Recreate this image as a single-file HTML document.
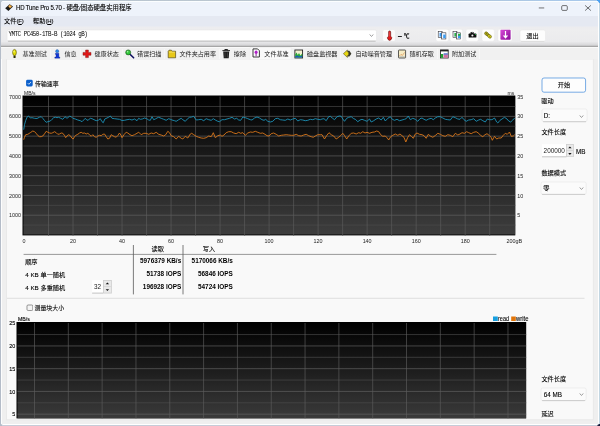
<!DOCTYPE html>
<html lang="zh-CN"><head><meta charset="utf-8"><title>HD Tune Pro 5.70</title>
<style>
html,body{margin:0;padding:0;}
body{width:600px;height:426px;overflow:hidden;position:relative;font-family:"Liberation Sans","Noto Sans CJK SC",sans-serif;background:#c6ccd8;-webkit-text-stroke:0.1px currentColor;}
#bl{position:absolute;left:0;top:0;width:2px;height:426px;background:#b4bcc8;}#br{position:absolute;right:0;top:0;width:2px;height:426px;background:#c2d6e2;}#bt{position:absolute;left:0;top:0;width:600px;height:2px;background:linear-gradient(90deg,#b8c4d0,#bcc8d0 60%,#a8c8ea 95%);}
#corner{position:absolute;right:0;bottom:0;width:3px;height:2.2px;background:radial-gradient(circle at 100% 100%,#0a0a2a 0,#1a2040 50%,rgba(160,170,200,0) 100%);}
#corner2{position:absolute;right:0;top:0;width:3px;height:3px;background:#4a9ff0;}
#frame{position:absolute;left:1.2px;top:1.2px;width:597.8px;height:423.8px;border-radius:2.5px;background:#fff;overflow:hidden;}
#win{will-change:transform;position:absolute;left:-0.2px;top:-1.2px;width:600px;height:426px;clip-path:inset(1.2px 2.2px 2.3px 1.2px);}
u{text-decoration-thickness:0.4px;text-underline-offset:0.5px;}
.c{font-size:1.07em;}
</style></head><body><div id="bl"></div><div id="br"></div><div id="bt"></div><div id="corner"></div><div id="corner2"></div><div id="frame"><div id="win" style="left:-1.2px">
<div style="position:absolute;left:0px;top:0px;width:600px;height:426px;background:#efefef;"></div>
<div style="position:absolute;left:0px;top:0px;width:600px;height:15.5px;background:#eef3fb;"></div>
<div style="position:absolute;left:0px;top:1.2px;width:600px;height:1.1px;background:#fbfeff;"></div>
<div style="position:absolute;left:1.2px;top:47px;width:1px;height:378px;background:#fdfdfd;"></div>
<div style="position:absolute;left:0px;top:15.5px;width:600px;height:11px;background:linear-gradient(#e5e9f2 0,#e5e9f2 88%,#ebecf0 100%);"></div>
<div style="position:absolute;left:0px;top:26.5px;width:600px;height:20.4px;background:linear-gradient(#ececef 0,#eeeeef 15%,#ebebed 72%,#d6d6d8 91%,#a6a6a6 96.5%,#a6a6a6 100%);"></div>
<div style="position:absolute;left:0px;top:46.9px;width:600px;height:0.7px;background:#fafafa;"></div>
<svg style="position:absolute;left:0;top:50px" width="600" height="376" viewBox="0 50 600 376"><rect x="6.6" y="59" width="586.7" height="360.8" fill="#f9f9f9" stroke="#e7e7e7" stroke-width="0.8"/></svg>
<svg style="position:absolute;left:4px;top:3px" width="10" height="10" viewBox="0 0 10 10"><path d="M1.2 5.2 L5.6 1.2 L9 3.6 L4.4 8 Z" fill="#1a1a1a"/><path d="M4.2 3.2 L5.8 1.8 L8 3.4 L6 5.2 Z" fill="#e8a030"/><path d="M5.4 2.8 L6.2 4.2" stroke="#fff" stroke-width="0.5"/></svg>
<div style="position:absolute;top:2.90px;line-height:10px;font-size:6.1px;color:#000;white-space:nowrap;left:16px;"><span style="letter-spacing:-0.2px;display:inline-block;transform:scaleY(1.12)">HD Tune Pro 5.70 -&nbsp;</span><span style="font-size:6.35px">硬盘</span>/<span style="font-size:6.35px">固态硬盘实用程序</span></div>
<svg style="position:absolute;left:536px;top:4px" width="34" height="8" viewBox="536 4 34 8"><path d="M538.8 7.95 H544.2" stroke="#2a2a2a" stroke-width="0.65"/><rect x="561.7" y="5.6" width="5.6" height="4.8" rx="1.1" fill="none" stroke="#2a2a2a" stroke-width="0.65"/></svg>
<svg style="position:absolute;left:584px;top:4px" width="8" height="8" viewBox="0 0 8 8"><path d="M1.1 1.4 L6.9 6.6 M6.9 1.4 L1.1 6.6" stroke="#2a2a2a" stroke-width="0.65" fill="none"/></svg>
<div style="position:absolute;top:16.30px;line-height:10px;font-size:6.0px;color:#000;white-space:nowrap;left:4px;"><span style="font-size:6.2px">文件</span><span style="letter-spacing:-0.15px">(<u>F</u>)</span></div>
<div style="position:absolute;top:16.30px;line-height:10px;font-size:6.0px;color:#000;white-space:nowrap;left:33px;"><span style="font-size:6.2px">帮助</span><span style="letter-spacing:-0.15px">(<u>H</u>)</span></div>
<svg style="position:absolute;left:5.7px;top:28.8px" width="371.6" height="13.1" viewBox="-1 -1 371.6 13.1"><rect x="0" y="0" width="369.6" height="11.1" rx="1.5" fill="#fff" stroke="#e2e2e2" stroke-width="0.5"/><path d="M0.8999999999999999 11.1 H368.70000000000005" stroke="#9a9a9a" stroke-width="0.6"/></svg>
<div style="position:absolute;top:30.30px;line-height:10px;font-size:5.9px;color:#000;white-space:nowrap;font-family:'Liberation Mono','Noto Sans CJK SC',monospace;letter-spacing:-0.5px;-webkit-text-stroke:0;transform:scaleY(1.18);left:8.5px;">YMTC PC450-1TB-B (1024 gB)</div>
<svg style="position:absolute;left:369.2px;top:34.3px" width="5" height="3" viewBox="0 0 5 3"><path d="M0.6 0.5 L2.5 2.3 L4.4 0.5" fill="none" stroke="#555" stroke-width="0.6"/></svg>
<div style="position:absolute;left:382.8px;top:29.8px;width:12.7px;height:11.2px;background:#fbfbfb;border-radius:1.5px;"></div>
<svg style="position:absolute;left:384px;top:29px" width="12" height="13" viewBox="384 29 12 13"><path d="M388.5 32 a1.1 1.1 0 0 1 2.2 0 V36.3 a2.1 2.1 0 1 1 -2.2 0 Z" fill="#e21c1c" stroke="#4a0c0c" stroke-width="0.5"/><path d="M389.2 32.2 V36.4" stroke="#ff9090" stroke-width="0.4"/></svg>
<div style="position:absolute;top:30.70px;line-height:10px;font-size:7.6px;color:#000;white-space:nowrap;font-weight:bold;left:397.8px;">–</div>
<div style="position:absolute;top:30.90px;line-height:10px;font-size:5.4px;color:#000;white-space:nowrap;font-weight:bold;left:404px;">℃</div>
<svg style="position:absolute;left:434.6px;top:28px" width="14.6" height="15" viewBox="0 0 14.6 15"><rect x="1" y="1.3" width="12.6" height="12" rx="1.8" fill="#fdfdfd" stroke="#e9e9e9" stroke-width="0.4"/></svg>
<svg style="position:absolute;left:449.4px;top:28px" width="14.6" height="15" viewBox="0 0 14.6 15"><rect x="1" y="1.3" width="12.6" height="12" rx="1.8" fill="#fdfdfd" stroke="#e9e9e9" stroke-width="0.4"/></svg>
<svg style="position:absolute;left:465px;top:28px" width="14.4" height="15" viewBox="0 0 14.4 15"><rect x="1" y="1.3" width="12.4" height="12" rx="1.8" fill="#fdfdfd" stroke="#e9e9e9" stroke-width="0.4"/></svg>
<svg style="position:absolute;left:480.6px;top:28px" width="14.4" height="15" viewBox="0 0 14.4 15"><rect x="1" y="1.3" width="12.4" height="12" rx="1.8" fill="#fdfdfd" stroke="#e9e9e9" stroke-width="0.4"/></svg>
<svg style="position:absolute;left:497.4px;top:28px" width="16" height="15" viewBox="0 0 16 15"><rect x="1" y="1.3" width="14" height="12" rx="1.8" fill="#fdfdfd" stroke="#e9e9e9" stroke-width="0.4"/></svg>
<svg style="position:absolute;left:430px;top:27px" width="90" height="17" viewBox="430 27 90 17"><defs><linearGradient id="pg" x1="0" y1="0" x2="1" y2="1"><stop offset="0" stop-color="#d84ad8"/><stop offset="1" stop-color="#880a96"/></linearGradient></defs><g transform="translate(0 0)"><rect x="438.2" y="31.4" width="3.9" height="6" fill="#f0f6ff" stroke="#2a2a30" stroke-width="0.55"/><rect x="439.6" y="33" width="2.2" height="3.6" fill="#3a9cf2"/><rect x="441.7" y="32.8" width="4.2" height="6.2" fill="#f0f6ff" stroke="#2a2a30" stroke-width="0.55"/><rect x="443.2" y="34.6" width="2.4" height="3.6" fill="#3a9cf2"/></g><g transform="translate(14.8 0)"><rect x="438.2" y="31.4" width="3.9" height="6" fill="#f0f6ff" stroke="#2a2a30" stroke-width="0.55"/><rect x="439.6" y="33" width="2.2" height="3.6" fill="#30b048"/><rect x="441.7" y="32.8" width="4.2" height="6.2" fill="#f0f6ff" stroke="#2a2a30" stroke-width="0.55"/><rect x="443.2" y="34.6" width="2.4" height="3.6" fill="#3a9cf2"/><rect x="443.2" y="33.8" width="2.4" height="2" fill="#30b048"/></g><rect x="468.6" y="33.6" width="7.8" height="4" rx="0.7" fill="#111"/><rect x="470.6" y="32" width="3" height="2" fill="#111"/><circle cx="472.4" cy="35.5" r="1.05" fill="#f4f4f4"/><rect x="471.8" y="31.4" width="0.8" height="1.6" fill="#ccc"/><rect x="475" y="34.1" width="0.9" height="0.9" fill="#20c040"/><g transform="rotate(40 488 35)"><ellipse cx="486.2" cy="35" rx="2.2" ry="1.6" fill="#b8b018" stroke="#5e5a0c" stroke-width="0.6"/><ellipse cx="489.9" cy="35" rx="2.2" ry="1.6" fill="#d8d020" stroke="#5e5a0c" stroke-width="0.6"/><ellipse cx="486.2" cy="35" rx="0.9" ry="0.5" fill="#6a6610"/><ellipse cx="489.9" cy="35" rx="0.9" ry="0.5" fill="#8a8614"/></g><rect x="500.4" y="29.8" width="10.2" height="10" rx="0.8" fill="url(#pg)"/><path d="M505.5 31 V37" stroke="#fff" stroke-width="1.2"/><path d="M502.8 35.4 H508.2 L505.5 38.7 Z" fill="#fff"/></svg>
<svg style="position:absolute;left:518.7px;top:28.6px" width="27.5" height="13.4" viewBox="-1 -1 27.5 13.4"><rect x="0" y="0" width="25.5" height="11.4" rx="2" fill="#fdfdfd" stroke="#e6e6e6" stroke-width="0.5"/><path d="M1.2 11.4 H24.3" stroke="#cfcfcf" stroke-width="0.6"/></svg>
<div style="position:absolute;top:30.60px;line-height:10px;font-size:5.7px;color:#000;white-space:nowrap;left:482.4px;width:100px;text-align:center;"><span style="font-size:6.2px">退出</span></div>
<div style="position:absolute;left:0px;top:47.6px;width:600px;height:11.6px;background:#f1f1f1;"></div>
<svg style="position:absolute;left:249px;top:46px" width="44" height="15" viewBox="249 46 44 15"><rect x="250.1" y="47.4" width="41" height="12.4" fill="#f9f9f9" stroke="#ececec" stroke-width="0.4"/></svg>
<div style="position:absolute;top:49.00px;line-height:10px;font-size:5.7px;color:#1a1a1a;white-space:nowrap;-webkit-text-stroke:0;left:22.5px;"><span style="font-size:6.1px">基准测试</span></div>
<div style="position:absolute;top:49.00px;line-height:10px;font-size:5.7px;color:#1a1a1a;white-space:nowrap;-webkit-text-stroke:0;left:64.5px;"><span style="font-size:6.1px">信息</span></div>
<div style="position:absolute;top:49.00px;line-height:10px;font-size:5.7px;color:#1a1a1a;white-space:nowrap;-webkit-text-stroke:0;left:94.5px;"><span style="font-size:6.1px">健康状态</span></div>
<div style="position:absolute;top:49.00px;line-height:10px;font-size:5.7px;color:#1a1a1a;white-space:nowrap;-webkit-text-stroke:0;left:137px;"><span style="font-size:6.1px">错误扫描</span></div>
<div style="position:absolute;top:49.00px;line-height:10px;font-size:5.7px;color:#1a1a1a;white-space:nowrap;-webkit-text-stroke:0;left:179.5px;"><span style="font-size:6.1px">文件夹占用率</span></div>
<div style="position:absolute;top:49.00px;line-height:10px;font-size:5.7px;color:#1a1a1a;white-space:nowrap;-webkit-text-stroke:0;left:233.8px;"><span style="font-size:6.1px">擦除</span></div>
<div style="position:absolute;top:48.50px;line-height:10px;font-size:5.7px;color:#1a1a1a;white-space:nowrap;-webkit-text-stroke:0;left:264.3px;"><span style="font-size:6.1px">文件基准</span></div>
<div style="position:absolute;top:49.00px;line-height:10px;font-size:5.7px;color:#1a1a1a;white-space:nowrap;-webkit-text-stroke:0;left:307px;"><span style="font-size:6.1px">磁盘监视器</span></div>
<div style="position:absolute;top:49.00px;line-height:10px;font-size:5.7px;color:#1a1a1a;white-space:nowrap;-webkit-text-stroke:0;left:355.5px;"><span style="font-size:6.1px">自动噪音管理</span></div>
<div style="position:absolute;top:49.00px;line-height:10px;font-size:5.7px;color:#1a1a1a;white-space:nowrap;-webkit-text-stroke:0;left:409.5px;"><span style="font-size:6.1px">随机存取</span></div>
<div style="position:absolute;top:49.00px;line-height:10px;font-size:5.7px;color:#1a1a1a;white-space:nowrap;-webkit-text-stroke:0;left:452px;"><span style="font-size:6.1px">附加测试</span></div>
<div style="position:absolute;left:49.8px;top:48.5px;width:0.6px;height:10px;background:#f7f7f7;"></div>
<div style="position:absolute;left:79.5px;top:48.5px;width:0.6px;height:10px;background:#f7f7f7;"></div>
<div style="position:absolute;left:121.5px;top:48.5px;width:0.6px;height:10px;background:#f7f7f7;"></div>
<div style="position:absolute;left:164px;top:48.5px;width:0.6px;height:10px;background:#f7f7f7;"></div>
<div style="position:absolute;left:219px;top:48.5px;width:0.6px;height:10px;background:#f7f7f7;"></div>
<div style="position:absolute;left:340px;top:48.5px;width:0.6px;height:10px;background:#f7f7f7;"></div>
<div style="position:absolute;left:395px;top:48.5px;width:0.6px;height:10px;background:#f7f7f7;"></div>
<div style="position:absolute;left:437px;top:48.5px;width:0.6px;height:10px;background:#f7f7f7;"></div>
<div style="position:absolute;left:479px;top:48.5px;width:0.6px;height:10px;background:#f7f7f7;"></div>
<svg style="position:absolute;left:0;top:46px" width="600" height="16" viewBox="0 46 600 16"><rect x="13.5" y="55.3" width="2.1" height="2.8" rx="0.6" fill="#2e2e08"/><ellipse cx="14.5" cy="52.5" rx="1.9" ry="3.1" fill="#e2dc00" stroke="#4a460a" stroke-width="0.55"/><ellipse cx="14" cy="51.6" rx="0.6" ry="1.1" fill="#ffffa0"/><circle cx="57.2" cy="51.2" r="1.6" fill="#2a8ae8" stroke="#103080" stroke-width="0.3"/><path d="M55.4 53.2 H58.9 V57 H59.8 V58.2 H54.8 V57 H56 V54.4 H55.4 Z" fill="#1038d8" stroke="#081870" stroke-width="0.3"/><path d="M85.6 50 H88.4 V52.4 H91 V55.2 H88.4 V57.6 H85.6 V55.2 H83 V52.4 H85.6 Z" fill="#e01818" stroke="#801010" stroke-width="0.45"/><path d="M130 54.2 L133.6 57.8" stroke="#101060" stroke-width="1.6" stroke-linecap="round"/><circle cx="128.2" cy="52.4" r="2.5" fill="#30c838" stroke="#1a4a1a" stroke-width="0.6"/><circle cx="127.6" cy="51.8" r="0.8" fill="#b0f0b0"/><path d="M168.2 51.2 L169 50.2 H171.4 L172.2 51.2 H175.6 V57.8 H168.2 Z" fill="#e8c818" stroke="#3a3208" stroke-width="0.6" stroke-linejoin="round"/><path d="M169 52.2 H174.8" stroke="#fff0a0" stroke-width="0.5"/><path d="M222.4 50.6 H230 M224.8 50.4 V49.5 H227.6 V50.4" stroke="#111" stroke-width="0.9" fill="none"/><path d="M223.2 51.6 H229.2 L228.7 58.2 H223.7 Z" fill="#1a1a1a"/><path d="M225 52.5 V57.4 M227.4 52.5 V57.4" stroke="#777" stroke-width="0.4"/><path d="M253 48.9 H257.6 L259.4 50.7 V57 H253 Z" fill="#fcfcfc" stroke="#1a1a1a" stroke-width="0.85" stroke-linejoin="round"/><ellipse cx="256.1" cy="52.2" rx="1.5" ry="1.8" fill="#b020c8"/><path d="M256.1 53.6 V56.2" stroke="#7a1090" stroke-width="0.9"/><rect x="294.9" y="50" width="7.7" height="8" fill="#f4f0d0" stroke="#1a1a1a" stroke-width="0.85"/><path d="M295.2 57.6 V54.6 L296.6 52.6 L297.8 55 L299 53 L300.4 55.4 L302.2 53.6 V57.6 Z" fill="#28a838"/><path d="M295.2 57.6 V56.4 L297 55.6 L299 56.6 L302.2 55.8 V57.6Z" fill="#1a5ac0"/><path d="M343.4 53.7 L347.4 50 V57.4 Z" fill="#e8d810" stroke="#3a3408" stroke-width="0.5" stroke-linejoin="round"/><path d="M347.6 50.8 H349.4 L351.4 53.7 L349.4 56.6 H347.6 Z" fill="#3a3a2a"/><rect x="346" y="52.2" width="2.4" height="3" fill="#e8d810"/><rect x="398.5" y="50" width="7.1" height="8" rx="0.6" fill="#f6ecc4" stroke="#2a2a2a" stroke-width="0.75"/><path d="M399.4 56 L401 54.4 L402.4 55.4 L404.6 52.4" stroke="#d07030" stroke-width="0.5" fill="none"/><path d="M399.4 56.8 H404.8" stroke="#6080c0" stroke-width="0.4"/><rect x="440.5" y="50" width="7.7" height="8" fill="#fff" stroke="#1a1a1a" stroke-width="0.8"/><rect x="440.4" y="49.8" width="7.8" height="1.6" fill="#222"/><rect x="440.8" y="54" width="2.4" height="3.8" fill="#20a030"/><rect x="443.6" y="54.6" width="4.2" height="3.2" fill="#d070a0"/><rect x="443.6" y="53.4" width="4.2" height="1.2" fill="#3050c0"/></svg>
<svg style="position:absolute;left:25px;top:79px" width="9" height="9" viewBox="25 79 9 9"><rect x="26.1" y="79.8" width="6.6" height="6.7" rx="1.4" fill="#0b5fcb"/><path d="M27.8 83.2 L28.9 84.3 L31 82" fill="none" stroke="#fff" stroke-width="0.75"/></svg>
<div style="position:absolute;top:78.50px;line-height:10px;font-size:5.6px;color:#000;white-space:nowrap;left:35px;"><span style="font-size:5.9px">传输速率</span></div>
<svg style="position:absolute;left:0;top:0" width="600" height="426" viewBox="0 0 600 426"><defs><linearGradient id="g1" x1="0" y1="0" x2="0" y2="1"><stop offset="0" stop-color="#000"/><stop offset="1" stop-color="#3e3e3e"/></linearGradient><linearGradient id="g2" x1="0" y1="0" x2="0" y2="1"><stop offset="0" stop-color="#000"/><stop offset="1" stop-color="#3a3a3a"/></linearGradient></defs><rect x="22.5" y="95.5" width="492.79999999999995" height="139.9" fill="#000"/><rect x="23.5" y="96.5" width="491.59999999999997" height="138.0" fill="url(#g1)"/><line x1="23.5" x2="515.3" y1="106.48" y2="106.48" stroke="#4e4e4e" stroke-width="0.65"/><line x1="23.5" x2="515.3" y1="116.37" y2="116.37" stroke="#646464" stroke-width="0.65"/><line x1="23.5" x2="515.3" y1="126.25" y2="126.25" stroke="#4e4e4e" stroke-width="0.65"/><line x1="23.5" x2="515.3" y1="136.14" y2="136.14" stroke="#646464" stroke-width="0.65"/><line x1="23.5" x2="515.3" y1="146.02" y2="146.02" stroke="#4e4e4e" stroke-width="0.65"/><line x1="23.5" x2="515.3" y1="155.91" y2="155.91" stroke="#646464" stroke-width="0.65"/><line x1="23.5" x2="515.3" y1="165.79" y2="165.79" stroke="#4e4e4e" stroke-width="0.65"/><line x1="23.5" x2="515.3" y1="175.68" y2="175.68" stroke="#646464" stroke-width="0.65"/><line x1="23.5" x2="515.3" y1="185.56" y2="185.56" stroke="#4e4e4e" stroke-width="0.65"/><line x1="23.5" x2="515.3" y1="195.45" y2="195.45" stroke="#646464" stroke-width="0.65"/><line x1="23.5" x2="515.3" y1="205.33" y2="205.33" stroke="#4e4e4e" stroke-width="0.65"/><line x1="23.5" x2="515.3" y1="215.22" y2="215.22" stroke="#646464" stroke-width="0.65"/><line x1="23.5" x2="515.3" y1="225.10" y2="225.10" stroke="#4e4e4e" stroke-width="0.65"/><line x1="48.51" x2="48.51" y1="96.5" y2="236.0" stroke="#5c5c5c" stroke-width="0.65"/><line x1="73.02" x2="73.02" y1="96.5" y2="236.0" stroke="#5c5c5c" stroke-width="0.65"/><line x1="97.53" x2="97.53" y1="96.5" y2="236.0" stroke="#5c5c5c" stroke-width="0.65"/><line x1="122.04" x2="122.04" y1="96.5" y2="236.0" stroke="#5c5c5c" stroke-width="0.65"/><line x1="146.55" x2="146.55" y1="96.5" y2="236.0" stroke="#5c5c5c" stroke-width="0.65"/><line x1="171.06" x2="171.06" y1="96.5" y2="236.0" stroke="#5c5c5c" stroke-width="0.65"/><line x1="195.57" x2="195.57" y1="96.5" y2="236.0" stroke="#5c5c5c" stroke-width="0.65"/><line x1="220.08" x2="220.08" y1="96.5" y2="236.0" stroke="#5c5c5c" stroke-width="0.65"/><line x1="244.59" x2="244.59" y1="96.5" y2="236.0" stroke="#5c5c5c" stroke-width="0.65"/><line x1="269.10" x2="269.10" y1="96.5" y2="236.0" stroke="#5c5c5c" stroke-width="0.65"/><line x1="293.61" x2="293.61" y1="96.5" y2="236.0" stroke="#5c5c5c" stroke-width="0.65"/><line x1="318.12" x2="318.12" y1="96.5" y2="236.0" stroke="#5c5c5c" stroke-width="0.65"/><line x1="342.63" x2="342.63" y1="96.5" y2="236.0" stroke="#5c5c5c" stroke-width="0.65"/><line x1="367.14" x2="367.14" y1="96.5" y2="236.0" stroke="#5c5c5c" stroke-width="0.65"/><line x1="391.65" x2="391.65" y1="96.5" y2="236.0" stroke="#5c5c5c" stroke-width="0.65"/><line x1="416.16" x2="416.16" y1="96.5" y2="236.0" stroke="#5c5c5c" stroke-width="0.65"/><line x1="440.67" x2="440.67" y1="96.5" y2="236.0" stroke="#5c5c5c" stroke-width="0.65"/><line x1="465.18" x2="465.18" y1="96.5" y2="236.0" stroke="#5c5c5c" stroke-width="0.65"/><line x1="489.69" x2="489.69" y1="96.5" y2="236.0" stroke="#5c5c5c" stroke-width="0.65"/><polyline points="23.7,139.7 24.5,137.2 25.7,134.7 27.8,134.3 30.3,132.7 32.8,131.0 34.5,131.7 36.2,133.3 37.8,135.5 39.5,136.7 41.2,136.7 42.8,136.0 44.5,133.8 46.2,131.3 47.8,132.2 49.5,133.0 51.2,133.3 52.8,132.7 54.5,131.7 56.2,132.7 57.8,134.3 59.5,134.0 61.2,133.0 62.8,133.3 64.5,135.5 65.7,137.7 67.0,136.0 68.7,134.7 70.3,135.7 72.0,138.3 73.2,139.0 74.5,136.7 76.2,135.0 77.8,134.3 79.5,133.0 81.2,132.3 82.8,133.3 84.5,133.0 86.2,134.0 87.8,133.3 89.5,134.7 91.2,136.3 92.8,134.7 94.5,136.7 96.2,137.3 97.8,136.0 99.5,135.3 101.2,135.7 102.8,134.3 104.5,134.0 106.2,136.7 107.8,139.0 109.5,138.3 111.2,134.7 112.8,135.7 114.5,136.7 116.2,137.2 117.8,135.5 119.5,133.0 121.2,135.5 122.0,137.7 124.0,134.7 126.2,132.2 127.8,133.0 130.0,134.7 132.0,135.7 134.5,134.7 137.0,133.3 138.7,132.2 141.2,134.7 143.7,133.3 146.2,133.3 148.7,134.3 151.2,133.0 153.7,133.7 156.2,132.3 158.7,134.3 161.2,135.0 163.7,136.0 165.7,134.7 167.8,131.3 169.5,132.7 171.2,135.7 173.7,136.7 176.2,139.0 178.7,136.3 181.2,138.3 182.8,139.0 185.3,136.3 187.8,138.0 190.3,134.0 191.7,133.3 193.7,134.7 196.2,136.3 198.7,137.3 201.2,138.0 203.7,138.3 206.2,137.7 208.7,136.0 211.2,136.7 213.3,132.7 215.3,137.7 217.8,135.7 220.3,135.0 222.0,136.3 224.0,135.0 226.2,132.7 228.7,131.7 231.2,131.7 233.7,133.0 236.2,133.7 238.7,132.3 240.7,133.3 242.8,132.7 245.3,135.3 247.8,133.0 250.3,132.0 252.8,132.3 255.3,131.3 257.8,132.3 260.3,133.3 262.8,133.0 265.0,134.3 267.0,135.7 269.0,136.0 271.2,133.7 273.7,133.0 276.2,134.3 278.7,136.0 281.2,135.3 283.7,135.0 286.2,134.7 288.7,135.0 291.2,135.3 293.7,135.3 296.2,134.3 298.7,135.7 301.2,136.0 303.7,135.0 306.2,134.3 308.7,135.7 311.2,136.7 313.3,137.3 315.3,136.0 317.8,134.7 320.3,134.7 322.0,134.7 324.5,139.0 326.7,135.5 329.0,132.7 331.2,134.7 333.7,136.0 336.2,139.0 338.7,137.3 340.7,135.5 342.8,133.3 344.5,135.5 346.7,139.0 348.7,136.0 351.2,133.3 353.7,133.0 356.2,134.0 358.7,132.7 360.7,133.3 362.8,131.7 365.0,133.0 367.0,132.3 369.5,133.3 372.0,132.3 374.5,132.0 376.7,131.0 378.7,131.7 380.7,134.7 382.8,136.3 385.3,136.0 387.3,138.0 388.7,140.0 390.7,136.7 392.8,135.3 395.3,134.0 397.8,135.3 400.0,134.0 402.0,135.7 404.0,137.3 405.8,142.0 407.8,137.3 409.5,134.7 411.7,136.7 413.3,138.3 415.3,134.0 417.0,133.0 419.5,134.3 422.0,134.7 424.0,135.7 426.2,138.3 428.3,134.3 430.3,136.0 432.8,137.3 435.3,135.5 437.8,133.3 440.3,134.3 442.8,135.7 445.3,136.3 447.8,134.7 450.3,135.3 452.8,136.7 455.3,133.3 457.8,135.0 460.0,134.0 462.0,132.7 464.5,133.3 466.7,131.7 468.7,132.7 471.2,133.7 473.7,132.3 476.2,131.7 478.7,133.3 480.7,135.5 482.8,136.7 485.0,134.7 487.0,133.7 489.5,135.7 491.2,137.3 492.3,140.3 494.5,136.3 496.7,139.0 498.7,138.0 501.2,138.0 503.3,135.3 505.3,133.3 507.3,134.3 509.5,132.0 511.2,136.3 513.3,136.0 514.7,134.7" fill="none" stroke="#d9761a" stroke-width="0.9" stroke-linejoin="round"/><polyline points="23.7,129.7 24.5,124.7 25.7,120.5 27.3,116.7 28.7,116.0 30.3,118.0 32.0,117.7 34.5,118.3 37.0,118.5 39.5,117.2 41.2,116.7 42.8,118.3 44.5,120.5 46.2,122.3 47.8,121.7 50.3,121.0 52.0,119.3 53.7,117.7 55.3,117.2 57.0,117.7 58.7,117.3 60.7,118.3 62.8,119.3 65.0,116.7 67.0,118.3 69.5,116.3 71.2,116.7 72.8,118.3 75.3,119.0 77.8,120.0 80.3,120.7 82.0,121.7 83.7,120.0 85.3,118.3 87.0,120.3 88.7,119.7 90.3,118.3 92.0,118.7 94.0,119.7 96.2,120.7 98.7,120.0 100.3,118.7 102.0,121.7 103.3,122.7 104.8,119.0 107.0,118.0 108.7,117.2 110.3,116.0 112.0,118.3 114.5,118.7 117.0,119.0 119.5,119.3 122.0,120.5 124.5,120.3 127.0,119.7 129.5,119.3 132.0,120.0 134.5,119.0 137.0,120.7 138.7,118.3 140.3,119.3 142.3,119.0 144.5,118.0 146.7,118.7 148.7,120.0 150.3,120.3 152.0,116.7 153.7,119.7 155.3,119.0 157.0,118.0 158.7,117.3 161.2,118.3 163.7,119.3 166.2,120.3 168.7,118.7 170.3,119.3 172.0,120.0 174.5,120.7 176.2,121.3 178.7,119.7 181.2,118.3 182.8,119.7 185.3,121.3 187.3,119.0 189.5,117.3 191.7,117.0 193.7,116.3 196.2,120.0 198.7,119.7 201.2,119.3 203.7,120.7 206.2,118.7 208.7,119.7 211.2,120.3 213.3,118.7 215.3,120.0 217.8,121.3 219.5,121.7 222.0,119.7 224.5,119.7 227.0,119.0 229.5,118.3 232.0,117.3 234.5,119.0 236.7,118.3 238.7,120.0 240.7,120.3 242.8,117.0 245.3,117.7 247.8,118.7 250.3,119.7 252.0,120.0 254.5,118.0 257.0,117.0 259.5,118.0 262.0,119.7 264.0,120.3 265.7,119.3 267.8,121.3 270.3,122.0 272.8,121.3 275.3,118.7 277.8,118.3 280.3,119.7 282.8,120.0 285.3,120.3 287.8,119.0 290.3,120.0 292.8,119.0 295.3,118.3 297.8,121.0 300.3,119.7 302.8,120.0 305.3,120.7 307.8,120.3 310.3,119.3 312.8,119.7 315.3,118.7 317.8,119.3 320.3,119.7 322.0,119.0 324.0,118.7 326.2,120.7 328.7,116.7 330.3,116.3 332.3,118.0 334.5,119.7 337.0,116.7 339.5,116.0 341.2,116.3 342.8,119.0 344.5,121.3 346.7,118.3 348.7,117.3 351.2,116.7 353.7,118.7 355.3,119.3 357.8,121.7 360.0,120.0 362.0,119.3 364.5,120.3 367.0,121.3 369.5,119.0 371.2,122.0 373.7,120.7 376.2,119.0 378.7,118.0 381.2,120.0 383.3,117.3 385.3,121.0 387.8,118.3 390.3,116.7 392.3,119.3 394.5,120.3 397.0,119.3 399.5,120.7 402.0,120.0 404.5,119.3 406.2,118.7 408.3,116.0 410.3,119.7 412.8,118.3 415.3,119.3 417.8,121.3 420.0,118.7 422.0,118.0 424.0,119.3 426.2,120.3 428.7,119.0 431.2,118.3 433.3,119.7 435.3,118.0 437.8,116.7 440.3,116.7 442.8,118.0 445.3,119.3 447.8,119.7 450.3,120.0 452.8,116.7 455.3,117.7 457.8,119.0 460.0,119.3 462.0,117.3 464.0,119.7 466.2,121.3 468.7,120.0 471.2,119.7 473.7,118.7 476.2,121.3 478.7,120.0 480.7,119.3 482.8,120.7 485.3,122.0 487.3,119.0 489.5,119.7 492.0,119.7 494.5,118.0 496.7,122.0 497.8,123.0 500.0,120.3 502.0,119.0 504.5,117.3 507.0,119.0 508.7,121.0 510.7,122.0 512.8,120.0 514.7,118.0" fill="none" stroke="#1c92b8" stroke-width="0.9" stroke-linejoin="round"/><rect x="16.5" y="322" width="509.70000000000005" height="96.39999999999998" fill="#000"/><rect x="17.5" y="323" width="508.50000000000006" height="95.19999999999997" fill="url(#g2)"/><line x1="17.5" x2="526.2" y1="334.57" y2="334.57" stroke="#4e4e4e" stroke-width="0.65"/><line x1="17.5" x2="526.2" y1="345.94" y2="345.94" stroke="#646464" stroke-width="0.65"/><line x1="17.5" x2="526.2" y1="357.31" y2="357.31" stroke="#4e4e4e" stroke-width="0.65"/><line x1="17.5" x2="526.2" y1="368.68" y2="368.68" stroke="#646464" stroke-width="0.65"/><line x1="17.5" x2="526.2" y1="380.05" y2="380.05" stroke="#4e4e4e" stroke-width="0.65"/><line x1="17.5" x2="526.2" y1="391.42" y2="391.42" stroke="#646464" stroke-width="0.65"/><line x1="17.5" x2="526.2" y1="402.79" y2="402.79" stroke="#4e4e4e" stroke-width="0.65"/><line x1="17.5" x2="526.2" y1="414.16" y2="414.16" stroke="#646464" stroke-width="0.65"/><line x1="34.50" x2="34.50" y1="323" y2="418.4" stroke="#5c5c5c" stroke-width="0.65"/><line x1="68.32" x2="68.32" y1="323" y2="418.4" stroke="#5c5c5c" stroke-width="0.65"/><line x1="102.14" x2="102.14" y1="323" y2="418.4" stroke="#5c5c5c" stroke-width="0.65"/><line x1="135.96" x2="135.96" y1="323" y2="418.4" stroke="#5c5c5c" stroke-width="0.65"/><line x1="169.78" x2="169.78" y1="323" y2="418.4" stroke="#5c5c5c" stroke-width="0.65"/><line x1="203.60" x2="203.60" y1="323" y2="418.4" stroke="#5c5c5c" stroke-width="0.65"/><line x1="237.42" x2="237.42" y1="323" y2="418.4" stroke="#5c5c5c" stroke-width="0.65"/><line x1="271.24" x2="271.24" y1="323" y2="418.4" stroke="#5c5c5c" stroke-width="0.65"/><line x1="305.06" x2="305.06" y1="323" y2="418.4" stroke="#5c5c5c" stroke-width="0.65"/><line x1="338.88" x2="338.88" y1="323" y2="418.4" stroke="#5c5c5c" stroke-width="0.65"/><line x1="372.70" x2="372.70" y1="323" y2="418.4" stroke="#5c5c5c" stroke-width="0.65"/><line x1="406.52" x2="406.52" y1="323" y2="418.4" stroke="#5c5c5c" stroke-width="0.65"/><line x1="440.34" x2="440.34" y1="323" y2="418.4" stroke="#5c5c5c" stroke-width="0.65"/><line x1="474.16" x2="474.16" y1="323" y2="418.4" stroke="#5c5c5c" stroke-width="0.65"/><line x1="507.98" x2="507.98" y1="323" y2="418.4" stroke="#5c5c5c" stroke-width="0.65"/></svg>
<div style="position:absolute;top:88.20px;line-height:10px;font-size:5.05px;color:#1c1c1c;white-space:nowrap;-webkit-text-stroke:0;left:24px;">MB/s</div>
<div style="position:absolute;top:88.40px;line-height:10px;font-size:5.05px;color:#1c1c1c;white-space:nowrap;-webkit-text-stroke:0;right:85.70000000000005px;text-align:right;">ms</div>
<div style="position:absolute;top:91.70px;line-height:10px;font-size:5.4px;color:#1c1c1c;white-space:nowrap;-webkit-text-stroke:0;right:579px;text-align:right;">7000</div>
<div style="position:absolute;top:111.47px;line-height:10px;font-size:5.4px;color:#1c1c1c;white-space:nowrap;-webkit-text-stroke:0;right:579px;text-align:right;">6000</div>
<div style="position:absolute;top:131.24px;line-height:10px;font-size:5.4px;color:#1c1c1c;white-space:nowrap;-webkit-text-stroke:0;right:579px;text-align:right;">5000</div>
<div style="position:absolute;top:151.01px;line-height:10px;font-size:5.4px;color:#1c1c1c;white-space:nowrap;-webkit-text-stroke:0;right:579px;text-align:right;">4000</div>
<div style="position:absolute;top:170.78px;line-height:10px;font-size:5.4px;color:#1c1c1c;white-space:nowrap;-webkit-text-stroke:0;right:579px;text-align:right;">3000</div>
<div style="position:absolute;top:190.55px;line-height:10px;font-size:5.4px;color:#1c1c1c;white-space:nowrap;-webkit-text-stroke:0;right:579px;text-align:right;">2000</div>
<div style="position:absolute;top:210.32px;line-height:10px;font-size:5.4px;color:#1c1c1c;white-space:nowrap;-webkit-text-stroke:0;right:579px;text-align:right;">1000</div>
<div style="position:absolute;top:91.70px;line-height:10px;font-size:5.4px;color:#1c1c1c;white-space:nowrap;-webkit-text-stroke:0;left:517.2px;">35</div>
<div style="position:absolute;top:111.47px;line-height:10px;font-size:5.4px;color:#1c1c1c;white-space:nowrap;-webkit-text-stroke:0;left:517.2px;">30</div>
<div style="position:absolute;top:131.24px;line-height:10px;font-size:5.4px;color:#1c1c1c;white-space:nowrap;-webkit-text-stroke:0;left:517.2px;">25</div>
<div style="position:absolute;top:151.01px;line-height:10px;font-size:5.4px;color:#1c1c1c;white-space:nowrap;-webkit-text-stroke:0;left:517.2px;">20</div>
<div style="position:absolute;top:170.78px;line-height:10px;font-size:5.4px;color:#1c1c1c;white-space:nowrap;-webkit-text-stroke:0;left:517.2px;">15</div>
<div style="position:absolute;top:190.55px;line-height:10px;font-size:5.4px;color:#1c1c1c;white-space:nowrap;-webkit-text-stroke:0;left:517.2px;">10</div>
<div style="position:absolute;top:210.32px;line-height:10px;font-size:5.4px;color:#1c1c1c;white-space:nowrap;-webkit-text-stroke:0;left:517.2px;">5</div>
<div style="position:absolute;top:235.60px;line-height:10px;font-size:5.4px;color:#1c1c1c;white-space:nowrap;-webkit-text-stroke:0;left:-26.0px;width:100px;text-align:center;">0</div>
<div style="position:absolute;top:235.60px;line-height:10px;font-size:5.4px;color:#1c1c1c;white-space:nowrap;-webkit-text-stroke:0;left:23.02000000000001px;width:100px;text-align:center;">20</div>
<div style="position:absolute;top:235.60px;line-height:10px;font-size:5.4px;color:#1c1c1c;white-space:nowrap;-webkit-text-stroke:0;left:72.04px;width:100px;text-align:center;">40</div>
<div style="position:absolute;top:235.60px;line-height:10px;font-size:5.4px;color:#1c1c1c;white-space:nowrap;-webkit-text-stroke:0;left:121.06px;width:100px;text-align:center;">60</div>
<div style="position:absolute;top:235.60px;line-height:10px;font-size:5.4px;color:#1c1c1c;white-space:nowrap;-webkit-text-stroke:0;left:170.08px;width:100px;text-align:center;">80</div>
<div style="position:absolute;top:235.60px;line-height:10px;font-size:5.4px;color:#1c1c1c;white-space:nowrap;-webkit-text-stroke:0;left:219.10000000000002px;width:100px;text-align:center;">100</div>
<div style="position:absolute;top:235.60px;line-height:10px;font-size:5.4px;color:#1c1c1c;white-space:nowrap;-webkit-text-stroke:0;left:268.12px;width:100px;text-align:center;">120</div>
<div style="position:absolute;top:235.60px;line-height:10px;font-size:5.4px;color:#1c1c1c;white-space:nowrap;-webkit-text-stroke:0;left:317.14000000000004px;width:100px;text-align:center;">140</div>
<div style="position:absolute;top:235.60px;line-height:10px;font-size:5.4px;color:#1c1c1c;white-space:nowrap;-webkit-text-stroke:0;left:366.16px;width:100px;text-align:center;">160</div>
<div style="position:absolute;top:235.60px;line-height:10px;font-size:5.4px;color:#1c1c1c;white-space:nowrap;-webkit-text-stroke:0;left:415.18px;width:100px;text-align:center;">180</div>
<div style="position:absolute;top:235.60px;line-height:10px;font-size:5.4px;color:#1c1c1c;white-space:nowrap;-webkit-text-stroke:0;right:78px;text-align:right;">200gB</div>
<svg style="position:absolute;left:0;top:240px" width="600" height="64" viewBox="0 240 600 64"><path d="M23.6 254.4 H496.4" stroke="#787878" stroke-width="0.75"/><path d="M133.4 245 V294.4 M183 245 V294.4" stroke="#5c5c5c" stroke-width="0.8"/><path d="M7 298.3 H584.5" stroke="#d4d4d4" stroke-width="0.7"/></svg>
<div style="position:absolute;top:244.20px;line-height:10px;font-size:5.8px;color:#000;white-space:nowrap;left:107.80000000000001px;width:100px;text-align:center;"><span style="font-size:6.2px">读取</span></div>
<div style="position:absolute;top:244.20px;line-height:10px;font-size:5.8px;color:#000;white-space:nowrap;left:159px;width:100px;text-align:center;"><span style="font-size:6.2px">写入</span></div>
<div style="position:absolute;top:256.90px;line-height:10px;font-size:6.25px;color:#000;white-space:nowrap;left:25.2px;"><span style="font-size:6.2px">顺序</span></div>
<div style="position:absolute;top:256.30px;line-height:10px;font-size:6.4px;color:#000;white-space:nowrap;font-weight:bold;-webkit-text-stroke:0;transform:scaleY(1.08);right:418.8px;text-align:right;">5976379 KB/s</div>
<div style="position:absolute;top:256.30px;line-height:10px;font-size:6.4px;color:#000;white-space:nowrap;font-weight:bold;-webkit-text-stroke:0;transform:scaleY(1.08);right:367.2px;text-align:right;">5170066 KB/s</div>
<div style="position:absolute;top:269.90px;line-height:10px;font-size:6.25px;color:#000;white-space:nowrap;left:25.2px;">4 KB <span style="font-size:6.2px">单一随机</span></div>
<div style="position:absolute;top:269.30px;line-height:10px;font-size:6.4px;color:#000;white-space:nowrap;font-weight:bold;-webkit-text-stroke:0;transform:scaleY(1.08);right:418.8px;text-align:right;">51738 IOPS</div>
<div style="position:absolute;top:269.30px;line-height:10px;font-size:6.4px;color:#000;white-space:nowrap;font-weight:bold;-webkit-text-stroke:0;transform:scaleY(1.08);right:367.2px;text-align:right;">56846 IOPS</div>
<div style="position:absolute;top:282.50px;line-height:10px;font-size:6.25px;color:#000;white-space:nowrap;left:25.2px;">4 KB <span style="font-size:6.2px">多重随机</span></div>
<div style="position:absolute;top:281.90px;line-height:10px;font-size:6.4px;color:#000;white-space:nowrap;font-weight:bold;-webkit-text-stroke:0;transform:scaleY(1.08);right:418.8px;text-align:right;">196928 IOPS</div>
<div style="position:absolute;top:281.90px;line-height:10px;font-size:6.4px;color:#000;white-space:nowrap;font-weight:bold;-webkit-text-stroke:0;transform:scaleY(1.08);right:367.2px;text-align:right;">54724 IOPS</div>
<svg style="position:absolute;left:91px;top:279px" width="14" height="16" viewBox="91 279 14 16"><rect x="92.1" y="280.2" width="11" height="12.9" fill="#fff"/><path d="M92.1 293.1 H103" stroke="#9c9c9c" stroke-width="0.6"/></svg>
<div style="position:absolute;top:281.60px;line-height:10px;font-size:6.3px;color:#222;white-space:nowrap;-webkit-text-stroke:0;left:94px;">32</div>
<svg style="position:absolute;left:103px;top:280px" width="8.8" height="13.5" viewBox="0 0 8.8 13.5"><rect x="0" y="0" width="8.8" height="13.5" fill="#cdcdcd"/><rect x="0.8" y="0.8" width="7.200000000000001" height="5.65" fill="#e9e9e9"/><rect x="0.8" y="7.05" width="7.200000000000001" height="5.65" fill="#e9e9e9"/><path d="M2.7 4.275 L4.4 2.475 L6.1000000000000005 4.275Z M2.7 9.325 L4.4 11.125 L6.1000000000000005 9.325Z" fill="#111"/></svg>
<svg style="position:absolute;left:25.55px;top:304.35px" width="7.8" height="7.5" viewBox="-1 -1 7.8 7.5"><rect x="0" y="0" width="5.8" height="5.5" rx="1.1" fill="#f4f4f4" stroke="#6c6c6c" stroke-width="0.7"/></svg>
<div style="position:absolute;top:303.20px;line-height:10px;font-size:5.6px;color:#000;white-space:nowrap;left:34.6px;"><span style="font-size:5.9px">测量块大小</span></div>
<div style="position:absolute;top:313.80px;line-height:10px;font-size:5.2px;color:#000;white-space:nowrap;left:18px;">MB/s</div>
<div style="position:absolute;top:318.30px;line-height:10px;font-size:5.4px;color:#000;white-space:nowrap;right:584.8px;text-align:right;">25</div>
<div style="position:absolute;top:341.05px;line-height:10px;font-size:5.4px;color:#000;white-space:nowrap;right:584.8px;text-align:right;">20</div>
<div style="position:absolute;top:363.80px;line-height:10px;font-size:5.4px;color:#000;white-space:nowrap;right:584.8px;text-align:right;">15</div>
<div style="position:absolute;top:386.55px;line-height:10px;font-size:5.4px;color:#000;white-space:nowrap;right:584.8px;text-align:right;">10</div>
<div style="position:absolute;top:409.30px;line-height:10px;font-size:5.4px;color:#000;white-space:nowrap;right:584.8px;text-align:right;">5</div>
<svg style="position:absolute;left:492px;top:315px" width="26" height="8" viewBox="492 315 26 8"><rect x="493" y="316.5" width="4.8" height="4.5" fill="#18a0e0"/><rect x="511.2" y="316.5" width="4.6" height="4.5" fill="#e07408"/></svg>
<div style="position:absolute;top:314.40px;line-height:10px;font-size:6.7px;color:#000;white-space:nowrap;transform:scaleX(0.82);transform-origin:0 50%;left:498px;">read</div>
<div style="position:absolute;top:314.40px;line-height:10px;font-size:6.7px;color:#000;white-space:nowrap;transform:scaleX(0.88);transform-origin:0 50%;left:516px;">write</div>
<svg style="position:absolute;left:541.2px;top:77.4px" width="45.6" height="16.2" viewBox="-1 -1 45.6 16.2"><rect x="0" y="0" width="43.6" height="14.2" rx="2" fill="#fdfdfd" stroke="#4a8fdc" stroke-width="0.75"/></svg>
<div style="position:absolute;top:80.20px;line-height:10px;font-size:5.8px;color:#000;white-space:nowrap;left:514px;width:100px;text-align:center;"><span style="font-size:6.2px">开始</span></div>
<div style="position:absolute;top:96.30px;line-height:10px;font-size:5.8px;color:#000;white-space:nowrap;left:541.3px;"><span style="font-size:6.2px">驱动</span></div>
<svg style="position:absolute;left:540.5px;top:108.4px" width="47.1" height="14.7" viewBox="-1 -1 47.1 14.7"><rect x="0" y="0" width="45.1" height="12.7" rx="1.8" fill="#fbfbfb" stroke="#e2e2e2" stroke-width="0.5"/><path d="M1.08 12.7 H44.02" stroke="#b4b4b4" stroke-width="0.6"/></svg>
<div style="position:absolute;top:111.00px;line-height:10px;font-size:6.3px;color:#000;white-space:nowrap;left:543.7px;">D:</div>
<svg style="position:absolute;left:579.4px;top:114.6px" width="5" height="3" viewBox="0 0 5 3"><path d="M0.6 0.5 L2.5 2.3 L4.4 0.5" fill="none" stroke="#555" stroke-width="0.6"/></svg>
<div style="position:absolute;top:127.40px;line-height:10px;font-size:5.8px;color:#000;white-space:nowrap;left:541.4px;"><span style="font-size:6.2px">文件长度</span></div>
<svg style="position:absolute;left:541px;top:143px" width="27" height="16" viewBox="541 143 27 16"><rect x="542" y="144.2" width="24.4" height="12.6" fill="#fff"/><path d="M542 156.8 H566.4" stroke="#9c9c9c" stroke-width="0.6"/></svg>
<div style="position:absolute;top:145.50px;line-height:10px;font-size:6.4px;color:#222;white-space:nowrap;-webkit-text-stroke:0;left:543.6px;">200000</div>
<svg style="position:absolute;left:566.3px;top:144px" width="7.8" height="13.2" viewBox="0 0 7.8 13.2"><rect x="0" y="0" width="7.8" height="13.2" fill="#cdcdcd"/><rect x="0.8" y="0.8" width="6.199999999999999" height="5.5" fill="#e9e9e9"/><rect x="0.8" y="6.8999999999999995" width="6.199999999999999" height="5.5" fill="#e9e9e9"/><path d="M2.2 4.2 L3.9 2.4 L5.6 4.2Z M2.2 9.099999999999998 L3.9 10.899999999999999 L5.6 9.099999999999998Z" fill="#111"/></svg>
<div style="position:absolute;top:147.30px;line-height:10px;font-size:6.3px;color:#000;white-space:nowrap;left:576px;">MB</div>
<div style="position:absolute;top:167.80px;line-height:10px;font-size:5.8px;color:#000;white-space:nowrap;left:541.4px;"><span style="font-size:6.2px">数据模式</span></div>
<svg style="position:absolute;left:540.4px;top:180.6px" width="47.2" height="14.4" viewBox="-1 -1 47.2 14.4"><rect x="0" y="0" width="45.2" height="12.4" rx="1.8" fill="#fbfbfb" stroke="#e2e2e2" stroke-width="0.5"/><path d="M1.08 12.4 H44.120000000000005" stroke="#b4b4b4" stroke-width="0.6"/></svg>
<div style="position:absolute;top:182.80px;line-height:10px;font-size:5.8px;color:#000;white-space:nowrap;left:543.2px;"><span style="font-size:6.2px">零</span></div>
<svg style="position:absolute;left:579.4px;top:186.6px" width="5" height="3" viewBox="0 0 5 3"><path d="M0.6 0.5 L2.5 2.3 L4.4 0.5" fill="none" stroke="#555" stroke-width="0.6"/></svg>
<div style="position:absolute;top:373.50px;line-height:10px;font-size:5.8px;color:#000;white-space:nowrap;left:541.4px;"><span style="font-size:6.2px">文件长度</span></div>
<svg style="position:absolute;left:540.4px;top:387px" width="47.2" height="14.6" viewBox="-1 -1 47.2 14.6"><rect x="0" y="0" width="45.2" height="12.6" rx="1.8" fill="#fbfbfb" stroke="#e2e2e2" stroke-width="0.5"/><path d="M1.08 12.6 H44.120000000000005" stroke="#b4b4b4" stroke-width="0.6"/></svg>
<div style="position:absolute;top:389.60px;line-height:10px;font-size:6.3px;color:#000;white-space:nowrap;left:543.7px;">64 MB</div>
<svg style="position:absolute;left:579.4px;top:393.3px" width="5" height="3" viewBox="0 0 5 3"><path d="M0.6 0.5 L2.5 2.3 L4.4 0.5" fill="none" stroke="#555" stroke-width="0.6"/></svg>
<div style="position:absolute;top:409.00px;line-height:10px;font-size:5.8px;color:#000;white-space:nowrap;left:541.4px;"><span style="font-size:6.2px">延迟</span></div>
</div></div></body></html>
